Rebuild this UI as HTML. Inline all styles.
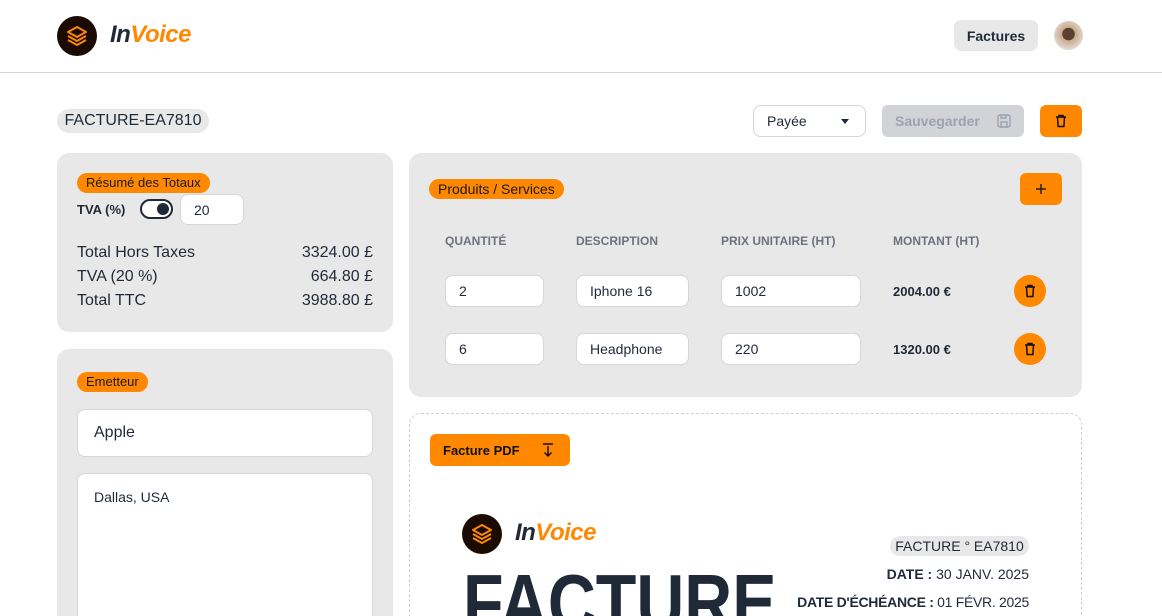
<!DOCTYPE html>
<html><head><meta charset="utf-8"><style>
*{box-sizing:border-box;margin:0;padding:0}
html,body{width:1162px;height:616px;overflow:hidden}
body{background:#fff;font-family:"Liberation Sans",sans-serif;color:#1f2937}
#w{position:relative;width:1162px;height:616px;overflow:hidden}
.a{position:absolute}
.panel{position:absolute;background:#e8e8e8;border-radius:12px}
.badge{position:absolute;background:#ff8800;border-radius:10px;font-size:13px;padding:0 9px;height:20px;line-height:20px;color:#1a1a1a}
.inp{position:absolute;background:#fff;border:1px solid #d6d6d6;border-radius:8px;font-size:14px;padding-left:13px;display:flex;align-items:center}
.btn{position:absolute;background:#ff8800;border-radius:6px;display:flex;align-items:center;justify-content:center}
.th{position:absolute;font-size:12px;font-weight:bold;color:#6b7280;top:234px}
.logo{position:absolute;border-radius:50%;background:#1a0a00;display:flex;align-items:center;justify-content:center}
.bold{font-weight:bold}
</style></head><body><div id="w">
<div class="logo" style="left:57px;top:16px;width:40px;height:40px">
<svg width="24" height="24" viewBox="0 0 24 24" fill="none" stroke="#ff8800" stroke-width="2" stroke-linejoin="round"><path d="M12 3L3 8l9 5 9-5z"/><path d="M3 12l9 5 9-5"/><path d="M3 16l9 5 9-5"/></svg></div>
<div class="a" style="left:110px;top:21px;font-size:24px;font-weight:bold;font-style:italic;letter-spacing:-0.5px"><span style="color:#1f2937">In</span><span style="color:#ff8800">Voice</span></div>
<div class="a" style="left:954px;top:20px;width:84px;height:31px;background:#e8e8e8;border-radius:7px;font-size:14px;font-weight:bold;display:flex;align-items:center;justify-content:center">Factures</div>
<div class="a" style="left:1054px;top:21px;width:29px;height:29px;border-radius:50%;background:radial-gradient(circle at 50% 45%,#5a4030 0 28%,#c8a888 30%,#e0d8d0 70%)"></div>
<div class="a" style="left:0;top:72px;width:1162px;height:1px;background:#d4d4d4"></div>

<div class="a" style="left:57px;top:109px;width:152px;height:24px;background:#e8e8e8;border-radius:12px;font-size:16px;display:flex;align-items:center;justify-content:center">FACTURE-EA7810</div>
<div class="inp" style="left:753px;top:105px;width:113px;height:32px;font-size:14px">Payée<span style="position:absolute;right:16px;top:13px;border:4px solid transparent;border-top:5px solid #1f2937"></span></div>
<div class="a" style="left:882px;top:105px;width:142px;height:32px;background:#d1d3d7;border-radius:6px;color:#9ca3af;font-size:14px;font-weight:bold;display:flex;align-items:center;padding-left:13px">Sauvegarder
<svg class="a" style="left:114px;top:8px" width="16" height="16" viewBox="0 0 16 16" fill="none" stroke="#9ca3af" stroke-width="1.4"><rect x="2" y="2" width="12" height="12" rx="2"/><rect x="5" y="9" width="6" height="5"/><path d="M5 2v3h5V2"/></svg></div>
<div class="btn" style="left:1040px;top:105px;width:42px;height:32px">
<svg width="16" height="16" viewBox="0 0 16 16" fill="none" stroke="#111" stroke-width="1.5"><path d="M3 4h10M6 4V2.5h4V4M4.5 4l.6 9.5h5.8l.6-9.5"/></svg></div>

<div class="panel" style="left:57px;top:153px;width:336px;height:179px"></div>
<div class="badge" style="left:77px;top:173px">Résumé des Totaux</div>
<div class="a bold" style="left:77px;top:202px;font-size:13px">TVA (%)</div>
<div class="a" style="left:140px;top:199px;width:33px;height:20px;border:2px solid #1f2937;border-radius:10px;background:#fff"><div class="a" style="right:2px;top:2px;width:12px;height:12px;border-radius:50%;background:#1f2937"></div></div>
<div class="inp" style="left:180px;top:194px;width:64px;height:31px">20</div>
<div class="a" style="left:77px;top:241px;font-size:16px;line-height:24px;width:296px">
<div style="display:flex;justify-content:space-between"><span>Total Hors Taxes</span><span>3324.00 £</span></div>
<div style="display:flex;justify-content:space-between"><span>TVA (20 %)</span><span>664.80 £</span></div>
<div style="display:flex;justify-content:space-between"><span>Total TTC</span><span>3988.80 £</span></div>
</div>

<div class="panel" style="left:57px;top:349px;width:336px;height:300px"></div>
<div class="badge" style="left:77px;top:372px">Emetteur</div>
<div class="inp" style="left:77px;top:409px;width:296px;height:48px;font-size:16px;padding-left:16px">Apple</div>
<div class="inp" style="left:77px;top:473px;width:296px;height:180px;font-size:14px;padding-left:16px;align-items:flex-start;padding-top:15px">Dallas, USA</div>

<div class="panel" style="left:409px;top:153px;width:673px;height:244px"></div>
<div class="badge" style="left:429px;top:179px;font-size:14px">Produits / Services</div>
<div class="btn" style="left:1020px;top:173px;width:42px;height:32px"><svg width="14" height="14" viewBox="0 0 14 14" stroke="#222" stroke-width="1.5"><path d="M7 2v10M2 7h10"/></svg></div>
<div class="th" style="left:445px">QUANTITÉ</div>
<div class="th" style="left:576px">DESCRIPTION</div>
<div class="th" style="left:721px">PRIX UNITAIRE (HT)</div>
<div class="th" style="left:893px">MONTANT (HT)</div>

<div class="inp" style="left:445px;top:275px;width:99px;height:32px">2</div>
<div class="inp" style="left:576px;top:275px;width:113px;height:32px">Iphone 16</div>
<div class="inp" style="left:721px;top:275px;width:140px;height:32px">1002</div>
<div class="a bold" style="left:893px;top:284px;font-size:13px">2004.00 €</div>
<div class="btn" style="left:1014px;top:275px;width:32px;height:32px;border-radius:50%"><svg width="16" height="16" viewBox="0 0 16 16" fill="none" stroke="#111" stroke-width="1.5"><path d="M3 4h10M6 4V2.5h4V4M4.5 4l.6 9.5h5.8l.6-9.5"/></svg></div>

<div class="inp" style="left:445px;top:333px;width:99px;height:32px">6</div>
<div class="inp" style="left:576px;top:333px;width:113px;height:32px">Headphone</div>
<div class="inp" style="left:721px;top:333px;width:140px;height:32px">220</div>
<div class="a bold" style="left:893px;top:342px;font-size:13px">1320.00 €</div>
<div class="btn" style="left:1014px;top:333px;width:32px;height:32px;border-radius:50%"><svg width="16" height="16" viewBox="0 0 16 16" fill="none" stroke="#111" stroke-width="1.5"><path d="M3 4h10M6 4V2.5h4V4M4.5 4l.6 9.5h5.8l.6-9.5"/></svg></div>

<div class="a" style="left:409px;top:413px;width:673px;height:260px;border:1px dashed #cfcfcf;border-radius:12px"></div>
<div class="btn" style="left:430px;top:434px;width:140px;height:32px;font-size:13px;font-weight:bold;color:#111;justify-content:flex-start;padding-left:13px">Facture PDF
<svg class="a" style="left:111px;top:8px" width="14" height="16" viewBox="0 0 14 16" fill="none" stroke="#111" stroke-width="1.4"><path d="M2 2h10M7 4v10M3.5 10.5L7 14l3.5-3.5"/></svg></div>
<div class="logo" style="left:462px;top:514px;width:40px;height:40px">
<svg width="24" height="24" viewBox="0 0 24 24" fill="none" stroke="#ff8800" stroke-width="2" stroke-linejoin="round"><path d="M12 3L3 8l9 5 9-5z"/><path d="M3 12l9 5 9-5"/><path d="M3 16l9 5 9-5"/></svg></div>
<div class="a" style="left:515px;top:519px;font-size:24px;font-weight:bold;font-style:italic;letter-spacing:-0.5px"><span>In</span><span style="color:#ff8800">Voice</span></div>
<div class="a" style="left:463px;top:563px;font-size:80px;font-weight:bold;line-height:80px;transform:scaleX(0.83);transform-origin:0 0">FACTURE</div>
<div class="a" style="left:890px;top:536px;width:139px;height:20px;background:#e8e8e8;border-radius:10px;font-size:14px;display:flex;align-items:center;justify-content:center">FACTURE ° EA7810</div>
<div class="a" style="right:133px;top:566px;font-size:14px;background:#fff"><b>DATE :</b> 30 JANV. 2025</div>
<div class="a" style="right:133px;top:594px;font-size:14px;background:#fff;letter-spacing:-0.3px"><b>DATE D'ÉCHÉANCE :</b> 01 FÉVR. 2025</div>
</div></body></html>
